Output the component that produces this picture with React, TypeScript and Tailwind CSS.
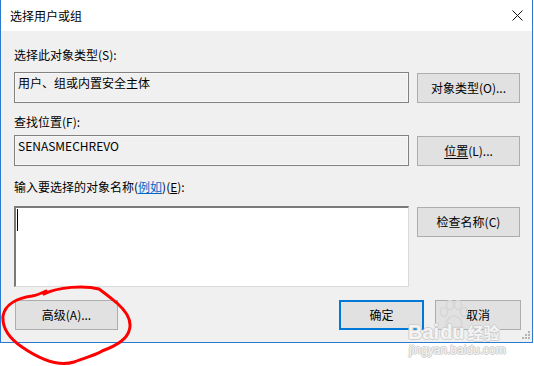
import React from "react"

const font = { fontFamily: '"Noto Sans CJK SC", "Noto Sans", sans-serif' }

function Btn({ children, primary = false, className = "" }: { children: React.ReactNode; primary?: boolean; className?: string }) {
  return (
    <div
      className={
        "flex h-[30px] items-center justify-center bg-[#e1e1e1] text-[12px] text-black " +
        (primary ? "border-2 border-[#0078d7] " : "border border-[#adadad] ") +
        className
      }
    >
      {children}
    </div>
  )
}

function ReadonlyBox({ text }: { text: string }) {
  return (
    <div className="h-[31px] w-[395px] border border-[#828282] bg-[#f0f0f0]">
      <div className="h-full w-full border border-[#f7f7f7] px-[2px] pt-[1px] text-[12px] leading-[16px] text-black">
        {text}
      </div>
    </div>
  )
}

const wmShadow = "1px 0 0 #cfcfcf, -1px 0 0 #cfcfcf, 0 1px 0 #cfcfcf, 0 -1px 0 #cfcfcf"

export default function App() {
  return (
    <div className="relative h-[366px] w-[534px] overflow-hidden bg-white" style={font}>
      <div className="flex h-[343px] w-[533px] flex-col border-x border-b border-[#2b7ad2]">
        {/* title bar */}
        <div className="flex h-[31px] items-center justify-between bg-white pl-[9px] pr-[9px]">
          <span className="text-[12px] text-black">选择用户或组</span>
          <svg width="11" height="11" viewBox="0 0 11 11">
            <path d="M0.5 0.5 L10.5 10.5 M10.5 0.5 L0.5 10.5" stroke="#111" strokeWidth="1" />
          </svg>
        </div>

        <div className="relative flex flex-1 flex-col bg-[#f0f0f0] pl-[13px] pr-[11px]">
          <div className="mt-[16px] h-[16px] text-[12px] leading-[16px]">选择此对象类型(S):</div>
          <div className="mt-[9px] flex items-center gap-[8px]">
            <ReadonlyBox text="用户、组或内置安全主体" />
            <Btn className="w-[103px]">对象类型(O)...</Btn>
          </div>

          <div className="mt-[11px] h-[16px] text-[12px] leading-[16px]">查找位置(F):</div>
          <div className="mt-[5px] flex items-center gap-[8px]">
            <ReadonlyBox text="SENASMECHREVO" />
            <Btn className="w-[103px]">
              <span className="underline underline-offset-2">位置</span>(L)...
            </Btn>
          </div>

          <div className="mt-[13px] h-[16px] text-[12px] leading-[16px]">
            输入要选择的对象名称(<span className="text-[#0066cc] underline">例如</span>)(<span className="underline">E</span>):
          </div>
          <div className="mt-[11px] flex items-start gap-[8px]">
            <div className="h-[81px] w-[395px] border-l-2 border-t-2 border-r border-b border-l-[#7a7a7a] border-t-[#7a7a7a] border-r-[#dadada] border-b-[#dadada] bg-white pl-[1px] pt-[1px]">
              <div className="h-[22px] w-[1px] bg-black" />
            </div>
            <Btn className="mt-[1px] w-[103px]">检查名称(C)</Btn>
          </div>

          <div className="mt-[13px] flex items-center">
            <Btn className="ml-[1px] w-[103px]">高级(A)...</Btn>
            <div className="flex-1" />
            <Btn primary className="w-[85px]">确定</Btn>
            <Btn className="ml-[11px] w-[86px]">取消</Btn>
          </div>

          {/* resize grip */}
          <svg className="absolute bottom-[2px] right-[1px]" width="9" height="9" viewBox="0 0 9 9">
            <rect x="6" y="0" width="2" height="2" fill="#b4b4b4" />
            <rect x="3" y="3" width="2" height="2" fill="#b4b4b4" />
            <rect x="6" y="3" width="2" height="2" fill="#b4b4b4" />
            <rect x="0" y="6" width="2" height="2" fill="#b4b4b4" />
            <rect x="3" y="6" width="2" height="2" fill="#b4b4b4" />
            <rect x="6" y="6" width="2" height="2" fill="#b4b4b4" />
          </svg>
        </div>
      </div>

      {/* baidu watermark paw */}
      <svg className="pointer-events-none absolute left-[438px] top-[300px]" width="32" height="30" viewBox="0 0 32 30">
        <g fill="none" stroke="#d6d6d6" strokeWidth="1.5">
          <ellipse cx="6" cy="12" rx="3.5" ry="4.5" />
          <ellipse cx="12" cy="5" rx="3.5" ry="4.5" />
          <ellipse cx="20" cy="5" rx="3.5" ry="4.5" />
          <ellipse cx="26" cy="12" rx="3.5" ry="4.5" />
          <path d="M8 26 C8 19 12 16 16 16 C20 16 24 19 24 26 C20 28 12 28 8 26 Z" />
        </g>
      </svg>

      {/* baidu watermark text */}
      <div className="pointer-events-none absolute left-[408px] top-[324px] flex flex-col items-start text-[#f4f4f4]">
        <div className="flex items-end text-[20px] font-bold leading-[16px]" style={{ fontFamily: '"Liberation Sans", sans-serif', textShadow: wmShadow }}>
          <span>Bai</span>
          <span className="ml-[1px]">du</span>
          <span className="ml-[3px] text-[16px] leading-[16px]" style={font}>经验</span>
        </div>
        <div className="ml-[1px] mt-[4px] text-[12px] leading-[12px]" style={{ fontFamily: '"Liberation Sans", sans-serif', textShadow: wmShadow }}>
          jingyan.baidu.com
        </div>
      </div>

      {/* red hand-drawn circle */}
      <svg className="pointer-events-none absolute left-0 top-0" width="534" height="366" viewBox="0 0 534 366">
        <path
          d="M44 294 C58 287 84 285 99 289 C106 294 112 299 117 303 C126 311 133 320 129 331 C126 341 113 347 102 351 C97 355 86 357 74 362 C58 367 38 358 22 347 C9 338 2 328 3 316 C5 304 18 298 32 296 C38 295 42 293 46 291"
          fill="none"
          stroke="#ff0000"
          strokeWidth="3"
          strokeLinecap="round"
        />
      </svg>
    </div>
  )
}
